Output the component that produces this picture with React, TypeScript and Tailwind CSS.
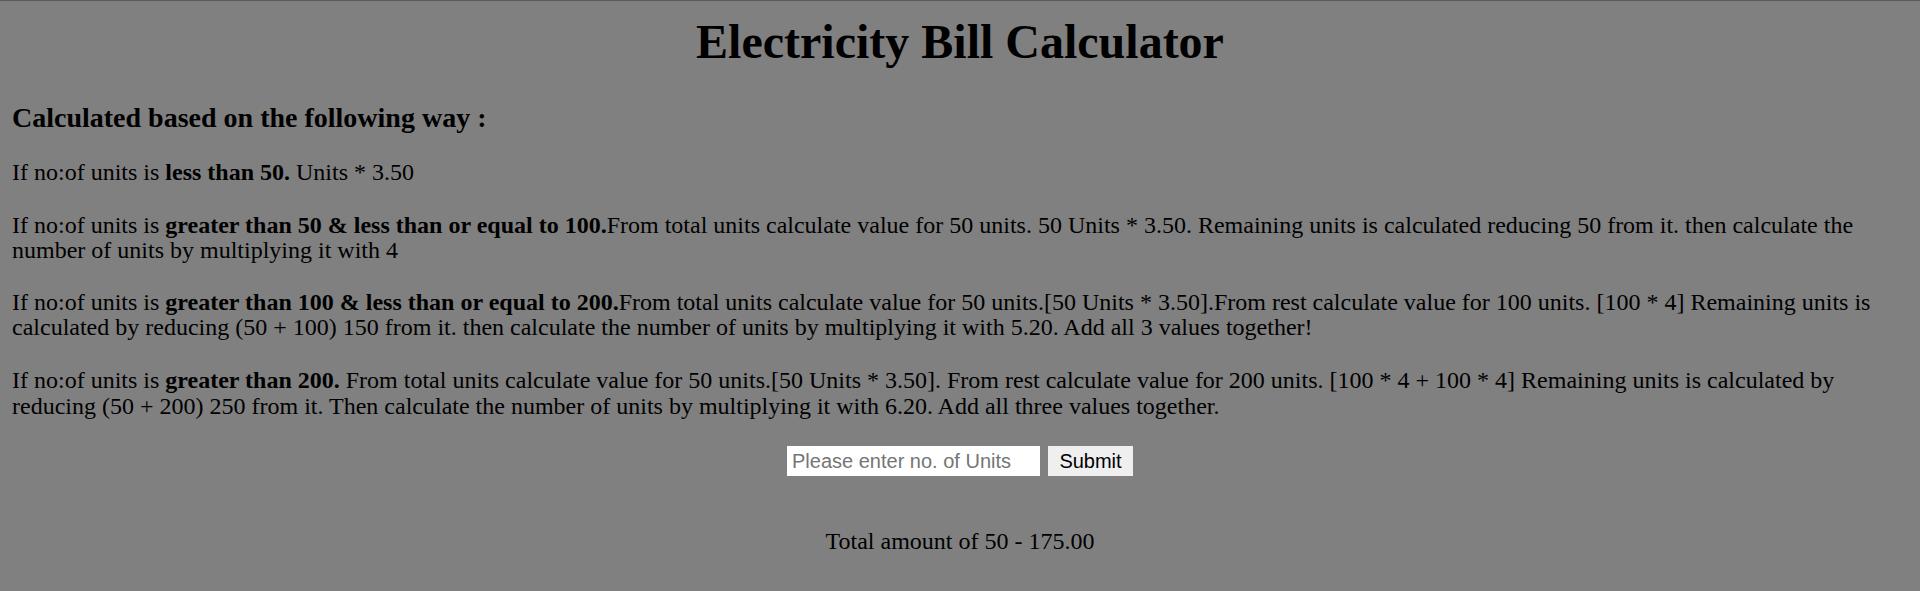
import React from "react";

export default function App() {
  return (
    <div
      className="min-h-[591px] w-full bg-[#808080] border-t border-[#5a5a5a] text-black px-3"
      style={{ fontFamily: '"Liberation Serif", "Times New Roman", serif' }}
    >
      <h1 className="text-center font-bold text-[48px] leading-[55px] pt-[13px] m-0">
        Electricity Bill Calculator
      </h1>
      <h3 className="font-bold text-[28px] leading-[32px] mt-[33px]">
        Calculated based on the following way :
      </h3>
      <div className="text-[24px] leading-[25.6px]">
        <p className="mt-[26px]">
          If no:of units is <b>less than 50.</b> Units * 3.50
        </p>
        <p className="mt-[27px]">
          If no:of units is <b>greater than 50 &amp; less than or equal to 100.</b>From total units calculate value for 50 units. 50 Units * 3.50. Remaining units is calculated reducing 50 from it. then calculate the number of units by multiplying it with 4
        </p>
        <p className="mt-[26px]">
          If no:of units is <b>greater than 100 &amp; less than or equal to 200.</b>From total units calculate value for 50 units.[50 Units * 3.50].From rest calculate value for 100 units. [100 * 4] Remaining units is calculated by reducing (50 + 100) 150 from it. then calculate the number of units by multiplying it with 5.20. Add all 3 values together!
        </p>
        <p className="mt-[27px]">
          If no:of units is <b>greater than 200.</b> From total units calculate value for 50 units.[50 Units * 3.50]. From rest calculate value for 200 units. [100 * 4 + 100 * 4] Remaining units is calculated by reducing (50 + 200) 250 from it. Then calculate the number of units by multiplying it with 6.20. Add all three values together.
        </p>
      </div>
      <div
        className="flex justify-center gap-2 mt-[27px]"
        style={{ fontFamily: '"Liberation Sans", Arial, sans-serif' }}
      >
        <input
          type="text"
          placeholder="Please enter no. of Units"
          className="w-[253px] h-[30px] bg-white px-[5px] text-[20px] placeholder:text-[#757575] outline-none"
        />
        <button className="w-[85px] h-[30px] bg-[#efefef] text-[20px] text-black">
          Submit
        </button>
      </div>
      <p className="text-center text-[24px] leading-[28px] mt-[51px]">
        Total amount of 50 - 175.00
      </p>
    </div>
  );
}
